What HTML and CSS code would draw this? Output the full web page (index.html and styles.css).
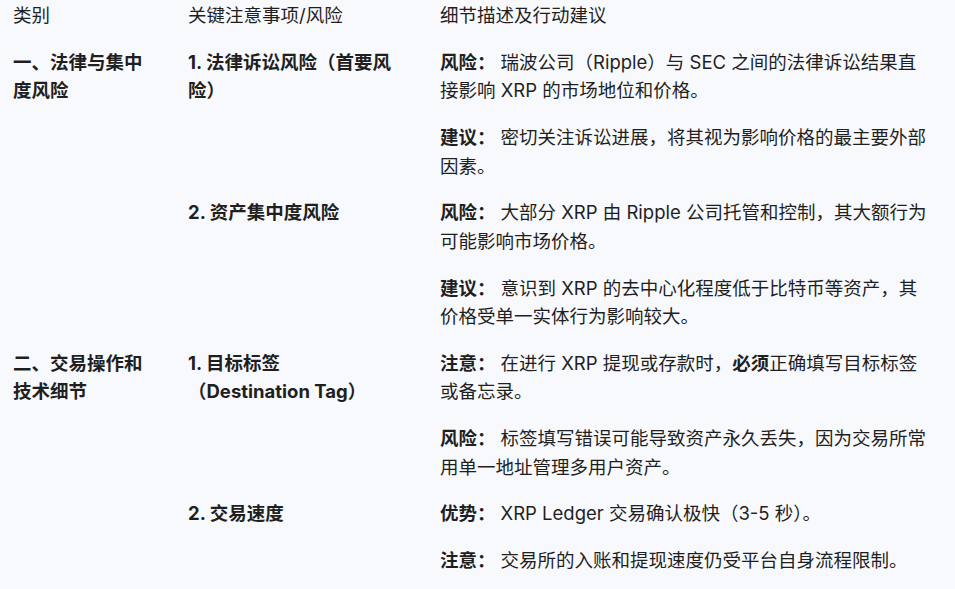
FILE: index.html
```html
<!DOCTYPE html>
<html lang="zh-CN">
<head>
<meta charset="utf-8">
<title>XRP 风险</title>
<link rel="stylesheet" href="styles.css">
</head>
<body>
<div class="table">
  <div class="cell head">类别</div>
  <div class="cell head">关键注意事项/风险</div>
  <div class="cell head">细节描述及行动建议</div>

  <div class="cell cat">一、法律与集中度风险</div>
  <div class="cell item">1. 法律诉讼风险（首要风险）</div>
  <div class="cell detail">
    <p><strong class="label">风险：</strong>瑞波公司（Ripple）与 SEC 之间的法律诉讼结果直接影响 XRP 的市场地位和价格。</p>
    <p><strong class="label">建议：</strong>密切关注诉讼进展，将其视为影响价格的最主要外部因素。</p>
  </div>

  <div class="cell cat"></div>
  <div class="cell item">2. 资产集中度风险</div>
  <div class="cell detail">
    <p><strong class="label">风险：</strong>大部分 XRP 由 Ripple 公司托管和控制，其大额行为可能影响市场价格。</p>
    <p><strong class="label">建议：</strong>意识到 XRP 的去中心化程度低于比特币等资产，其价格受单一实体行为影响较大。</p>
  </div>

  <div class="cell cat">二、交易操作和技术细节</div>
  <div class="cell item">1. 目标标签<span class="nowrap">（Destination Tag）</span></div>
  <div class="cell detail">
    <p><strong class="label">注意：</strong>在进行 XRP 提现或存款时，<strong>必须</strong>正确填写目标标签或备忘录。</p>
    <p><strong class="label">风险：</strong>标签填写错误可能导致资产永久丢失，因为交易所常用单一地址管理多用户资产。</p>
  </div>

  <div class="cell cat"></div>
  <div class="cell item">2. 交易速度</div>
  <div class="cell detail">
    <p><strong class="label">优势：</strong>XRP Ledger 交易确认极快（3-5 秒）。</p>
    <p><strong class="label">注意：</strong>交易所的入账和提现速度仍受平台自身流程限制。</p>
  </div>
</div>
</body>
</html>
```
FILE: styles.css
```css
html, body {
  margin: 0;
  padding: 0;
  background: #f8f9fc;
}

body {
  font-family: "Inter", "Noto Sans CJK SC", sans-serif;
  font-size: 18.5px;
  line-height: 28.5px;
  color: #1f1f1f;
  padding: 1px 0 0 13px;
  overflow: hidden;
  height: 588px;
}

.table {
  display: grid;
  grid-template-columns: 175px 252px 488px;
}

.cell {
  padding: 9px 0;
}

.cat, .item {
  font-weight: 700;
  padding-right: 36px;
}

.head {
  padding-top: 0;
  font-weight: 400;
  color: #1f1f1f;
}

.nowrap {
  white-space: nowrap;
}

.detail p {
  margin: 0;
}

.detail p + p {
  margin-top: 18.5px;
}

strong {
  font-weight: 700;
}

.label {
  margin-right: 5px;
}
```
